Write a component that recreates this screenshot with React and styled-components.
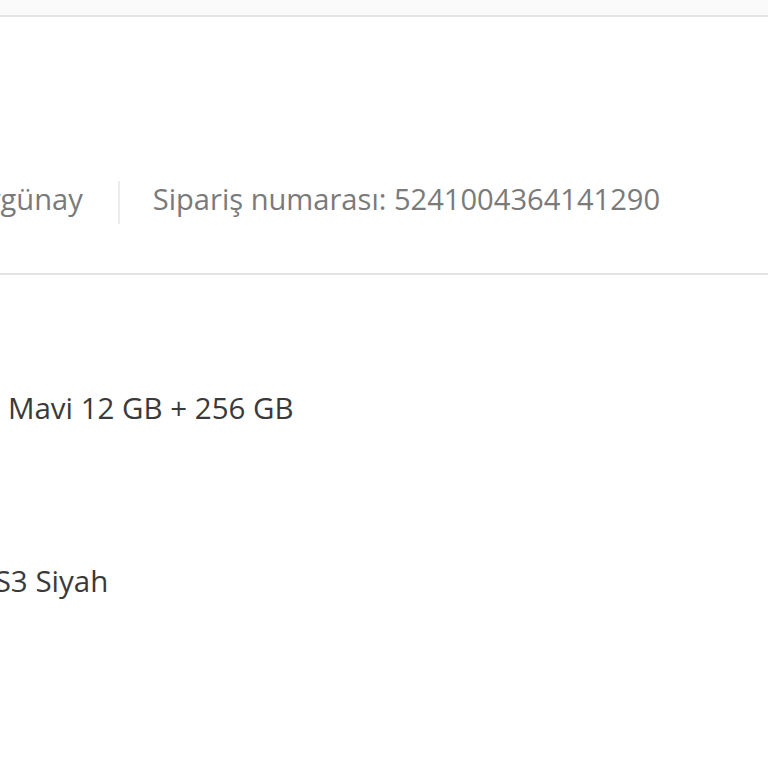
import styled, { createGlobalStyle } from "styled-components";

const Global = createGlobalStyle`
  html, body {
    margin: 0;
    padding: 0;
    background: #fff;
    font-family: "Open Sans", "Noto Sans", sans-serif;
  }
`;

const Page = styled.div`
  width: 768px;
  height: 768px;
  overflow: hidden;
  background: #fff;
`;

const TopStrip = styled.div`
  height: 15px;
  background: #fafafa;
  border-bottom: 2px solid #e4e4e4;
`;

const OrderHeader = styled.div`
  height: 258px;
  box-sizing: border-box;
  padding-top: 156px;
  border-bottom: 2px solid #e4e4e4;
`;

const Clip = styled.div`
  display: flex;
  align-items: center;
  margin-left: ${(p) => p.$shift}px;
  white-space: nowrap;
`;

const Meta = styled.span`
  font-size: 29.1px;
  line-height: 40px;
  color: #7a7a7a;
`;

const Divider = styled.span`
  width: 2px;
  height: 43px;
  background: #ececec;
  margin: 8px 33px 0 35px;
`;

const Items = styled.div`
  display: flex;
  flex-direction: column;
  padding-top: 113px;
  gap: 133px;
`;

const ItemName = styled.div`
  font-size: 29.5px;
  line-height: 40px;
  color: #3a3a3a;
  white-space: nowrap;
  margin-left: ${(p) => p.$shift}px;
`;

export default function App() {
  return (
    <Page>
      <Global />
      <TopStrip />
      <OrderHeader>
        <Clip $shift={-102}>
          <Meta>Alıcı: Aygünay</Meta>
          <Divider />
          <Meta>Sipariş numarası: 5241004364141290</Meta>
        </Clip>
      </OrderHeader>
      <Items>
        <ItemName $shift={-206}>Xiaomi 14T Pro Mavi 12 GB + 256 GB</ItemName>
        <ItemName $shift={-202}>Redmi Buds 5 S3 Siyah</ItemName>
      </Items>
    </Page>
  );
}
